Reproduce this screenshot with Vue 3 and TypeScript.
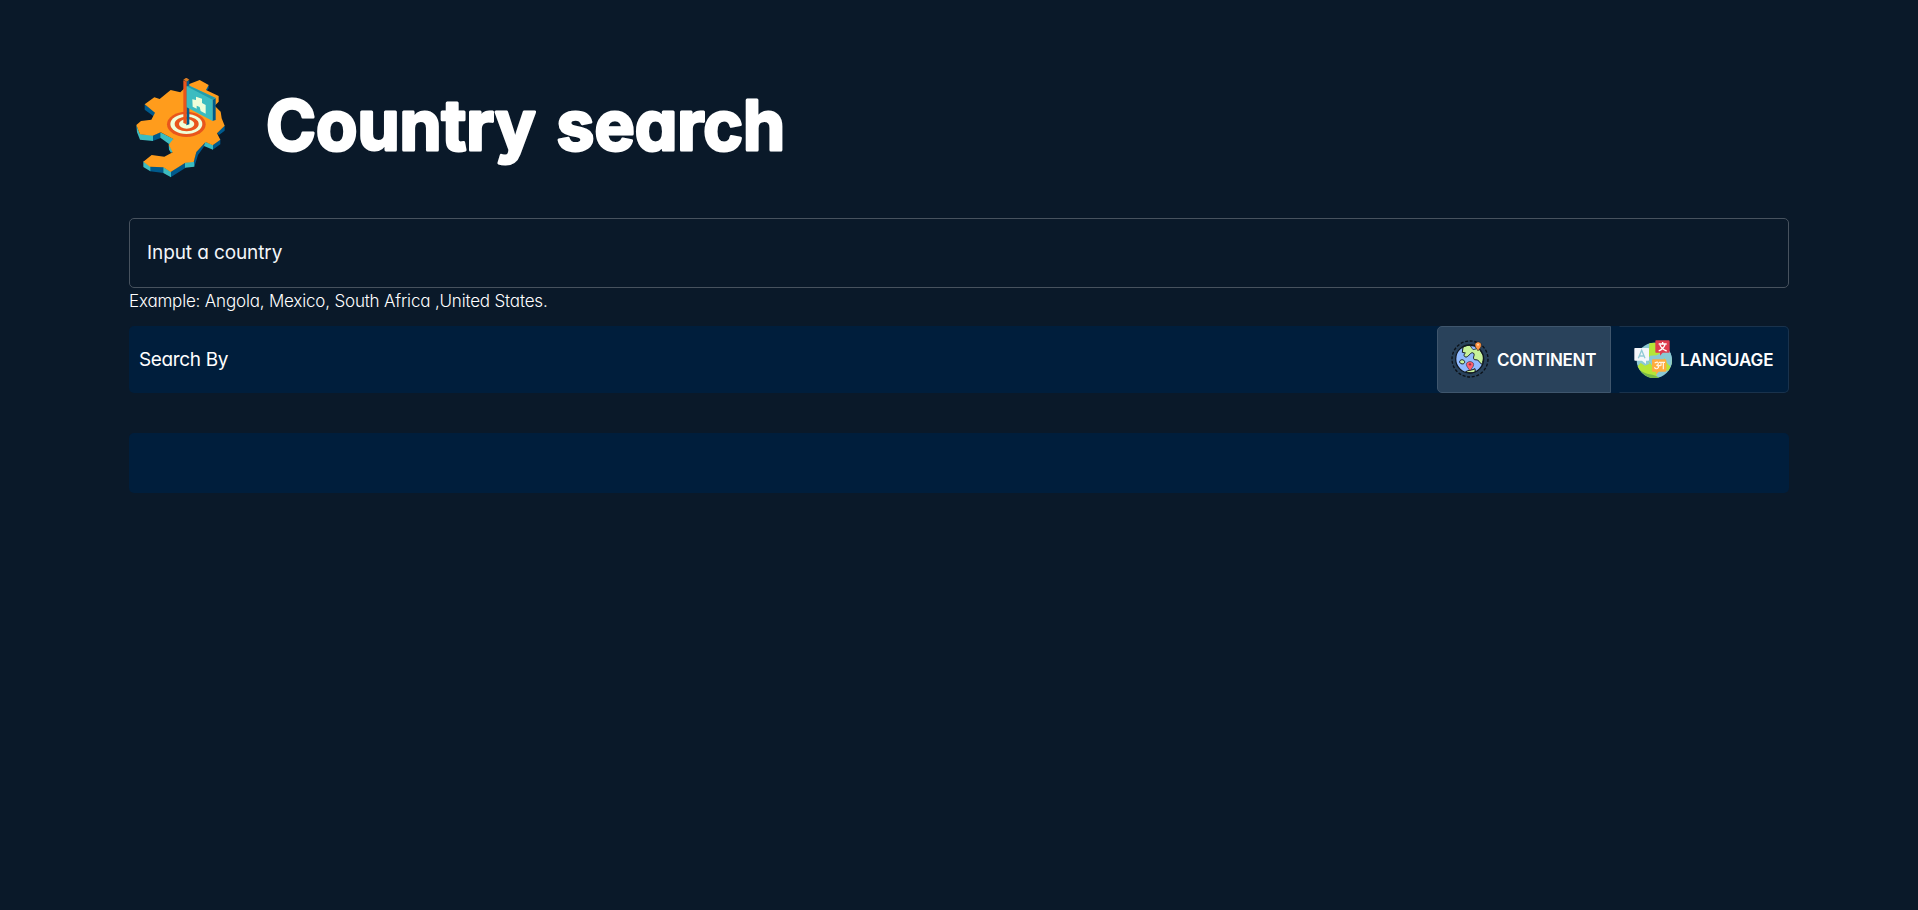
<script setup lang="ts">
import { ref } from 'vue'

type SearchMode = 'continent' | 'language'

const mode = ref<SearchMode>('continent')
const query = ref('')
</script>

<template>
  <main class="page">
    <header class="header">
      <svg class="logo" viewBox="30 39 300 300" aria-hidden="true">
        <path fill="#005a8c" d="M74 118L108 142V159L74 134ZM98 211L122 202V219L98 228ZM90 304L131 306V324L90 319ZM152 320L197 292V308L152 337ZM220 291L229 260L257 231V238L234 270L223 305ZM278 240L301 223V238L278 254ZM291 204L314 181V197L297 210ZM266 60V70L260 78L256 72Z" />
        <path fill="#3cbcc0" d="M49 180L60 207L99 211V228L60 224L51 202ZM121 202L160 221V227L148 238L121 218ZM146 238L160 260L153 263L147 254ZM70 289L91 304V319L70 306ZM130 306L153 320V337L130 324ZM195 292L222 290L223 305L195 308ZM256 230L279 240V254L252 243Z" />
        <path fill="#ff9c1c" d="M206 58L239 45L266 60L258 75L296 93V110L284 122L302 140L305 160L314 182L291 205L301 224L278 241L257 231L229 261L221 291L196 293L152 321L130 307L90 305L70 290L95 270L133 275L158 262L146 239L160 222L122 202L98 212L60 208L49 180L63 168L94 164L105 143L74 118L103 97L119 102L152 75L181 82Z" />
        <ellipse cx="199" cy="178" rx="58" ry="38" fill="#e9551b" />
        <ellipse cx="199" cy="177" rx="48" ry="30" fill="#efffda" />
        <ellipse cx="200" cy="177" rx="36" ry="22" fill="#e9551b" />
        <ellipse cx="200" cy="177" rx="23" ry="14" fill="#efffda" />
        <path fill="#005a8c" d="M199 50L208 46V178L199 181ZM277 104L287 99V165L277 168Z" />
        <path fill="#e9551b" d="M190 46L200 50V178L190 174Z" />
        <path fill="#d77b25" d="M190 44L199 38L208 44L200 50Z" />
        <path fill="#3cbcc0" d="M200 64L208 62L287 99L278 104V168L200 127Z" />
        <path fill="#239ca9" d="M200 64L208 62L287 99L278 104Z" />
        <path fill="#efffda" d="M217 103L228 105L228 95L246 101V114L257 120V146L242 138L239 126L230 122V131L218 125Z" />
      </svg>
      <h1 class="title">
        <svg class="title-art" width="520" height="90" viewBox="0 0 520 90" role="img">
          <text x="2" y="62" textLength="519" lengthAdjust="spacingAndGlyphs">Country search</text>
        </svg>
      </h1>
    </header>

    <input v-model="query" class="country-input" type="text" placeholder="Input a country" />
    <p class="hint">Example: Angola, Mexico, South Africa ,United States.</p>

    <section class="search-bar">
      <span class="search-label">Search By</span>
      <div class="modes">
        <button class="mode continent" :class="{ selected: mode === 'continent' }" @click="mode = 'continent'">
          <svg class="mode-icon" viewBox="63 59 114 114" aria-hidden="true">
            <circle cx="120" cy="116" r="54" fill="none" stroke="#0b1118" stroke-width="4" stroke-dasharray="9 5" />
            <circle cx="119" cy="116" r="42" fill="#91baff" />
            <path fill="#c8f29a" stroke="#101820" stroke-width="3" d="M99 80C112 73 132 72 145 81L160 106C161 115 159 125 155 132L143 119L133 118C126 110 137 105 130 98C121 94 119 107 109 110C100 110 101 102 106 98L97 96Z" />
            <path fill="#91baff" stroke="#101820" stroke-width="2" d="M121 77L135 76L139 86L129 88Z" />
            <path fill="#c8f29a" stroke="#101820" stroke-width="3" d="M89 123C92 116 102 117 104 124C105 132 93 133 89 126ZM107 154C115 149 128 150 135 145L136 155C126 159 115 159 107 154Z" />
            <circle cx="119" cy="116" r="42" fill="none" stroke="#101820" stroke-width="4" />
            <path fill="#ff9544" stroke="#101820" stroke-width="1.5" d="M144 92C140 84 134 79 135 73C136 62 153 62 154 73C155 80 148 85 144 92Z" />
            <circle cx="144" cy="73" r="3" fill="#ffd6a8" />
            <path fill="#ff5f70" stroke="#101820" stroke-width="1.5" d="M120 152C116 144 109 139 109 132C110 121 130 121 131 132C131 140 124 144 120 152Z" />
            <circle cx="120" cy="132" r="3.5" fill="#8c3441" />
          </svg>
          <span class="mode-text">CONTINENT</span>
        </button>
        <button class="mode language" :class="{ selected: mode === 'language' }" @click="mode = 'language'">
          <svg class="mode-icon" viewBox="71 59 114 114" aria-hidden="true">
            <circle cx="132" cy="120" r="53" fill="#8bc9d3" />
            <path fill="#b5e637" d="M117 69C131 65 145 67 157 73L157 96L139 105L119 106L112 119L136 148L139 172C120 175 92 162 82 138L91 128L104 136L118 130L110 114L116 97ZM176 101L167 104L160 116L166 126L164 149L174 151C187 133 187 115 176 101Z" />
            <path fill="#8bc9d3" d="M166 94L177 91C185 104 187 125 181 139L170 128L160 110Z" />
            <path fill="#79b946" d="M88 148C107 165 130 159 147 172C125 179 102 169 88 148Z" />
            <path fill="#f5f7fb" d="M74 83H114Q116 83 116 85V119Q116 121 114 121H107V131L95 121H74Q72 121 72 119V85Q72 83 74 83Z" />
            <path fill="none" stroke="#91cbd5" stroke-width="4" d="M84 114L94 90L104 114M88 107H100" />
            <path fill="#df3c4e" d="M137 60H175Q178 60 178 63V94Q178 97 175 97H157L149 106V97H137Q135 97 135 94V63Q135 60 137 60Z" />
            <path fill="none" stroke="#fff" stroke-width="4" d="M145 71H169M157 65V71M164 73C160 83 154 88 145 92M149 74C153 83 160 89 169 92" />
            <path fill="#ffac3e" d="M128 117H165Q168 117 168 120V151Q168 154 165 154H145L137 163V154H128Q125 154 125 151V120Q125 117 128 117Z" />
            <path fill="none" stroke="#fff7e9" stroke-width="3.5" d="M133 128Q144 122 144 130Q144 135 138 135Q147 136 144 142Q138 149 132 141M145 136H151M146 126H164M159 127V147M152 127V136" />
          </svg>
          <span class="mode-text">LANGUAGE</span>
        </button>
      </div>
    </section>

    <section class="results"></section>
  </main>
</template>

<style>
html,
body {
  margin: 0;
  background: #0a1929;
}
</style>

<style scoped>
.page {
  box-sizing: border-box;
  width: 1660px;
  min-height: 910px;
  margin: 0 auto;
  padding-top: 78px;
  color: #fff;
  font-family: Inter, Lato, sans-serif;
  font-feature-settings: 'cv11' 1;
}

.header {
  display: flex;
  height: 140px;
  padding-left: 1px;
}

.logo {
  width: 100px;
  height: 100px;
}

.title {
  margin: 10px 0 0 34px;
  line-height: 0;
}

.title-art {
  overflow: visible;
}

.title-art text {
  fill: #fff;
  stroke: #fff;
  stroke-width: 3px;
  stroke-linejoin: round;
  font-size: 69px;
  font-weight: 700;
  word-spacing: 5px;
}

.country-input {
  display: block;
  box-sizing: border-box;
  width: 100%;
  height: 70px;
  padding: 0 17px 2px;
  border: 1px solid #47525e;
  border-radius: 5px;
  outline: none;
  background: transparent;
  color: #fff;
  font: inherit;
  font-feature-settings: inherit;
  font-size: 19px;
  letter-spacing: -0.1px;
}

.country-input::placeholder {
  color: #f3f6f9;
  opacity: 1;
}

.hint {
  height: 38px;
  margin: 0;
  font-size: 17px;
  font-weight: 300;
  line-height: 27px;
  letter-spacing: -0.18px;
  white-space: nowrap;
}

.search-bar {
  display: flex;
  align-items: center;
  justify-content: space-between;
  height: 67px;
  padding-left: 10px;
  border-radius: 5px;
  background: #001e3c;
}

.search-label {
  font-size: 19px;
  letter-spacing: -0.35px;
}

.modes {
  display: flex;
  gap: 8px;
}

.mode {
  display: flex;
  align-items: center;
  box-sizing: border-box;
  height: 67px;
  padding: 0 0 0 13px;
  border: 1px solid #19324c;
  background: transparent;
  color: #fff;
  font: inherit;
  font-size: 17px;
  font-weight: 600;
  cursor: pointer;
}

.continent {
  width: 174px;
  border-radius: 5px 0 0 5px;
}

.language {
  width: 170px;
  padding-left: 14px;
  border-left-color: transparent;
  border-radius: 0 5px 5px 0;
}

.mode.selected {
  border-color: #3f566d;
  background: #29425b;
}

.mode-icon {
  width: 38px;
  height: 38px;
  margin: -1px 8px 0 0;
}

.mode-text {
  letter-spacing: -0.3px;
}

.language .mode-text {
  letter-spacing: -0.15px;
}

.results {
  height: 60px;
  margin-top: 40px;
  border-radius: 5px;
  background: #001e3c;
}
</style>
